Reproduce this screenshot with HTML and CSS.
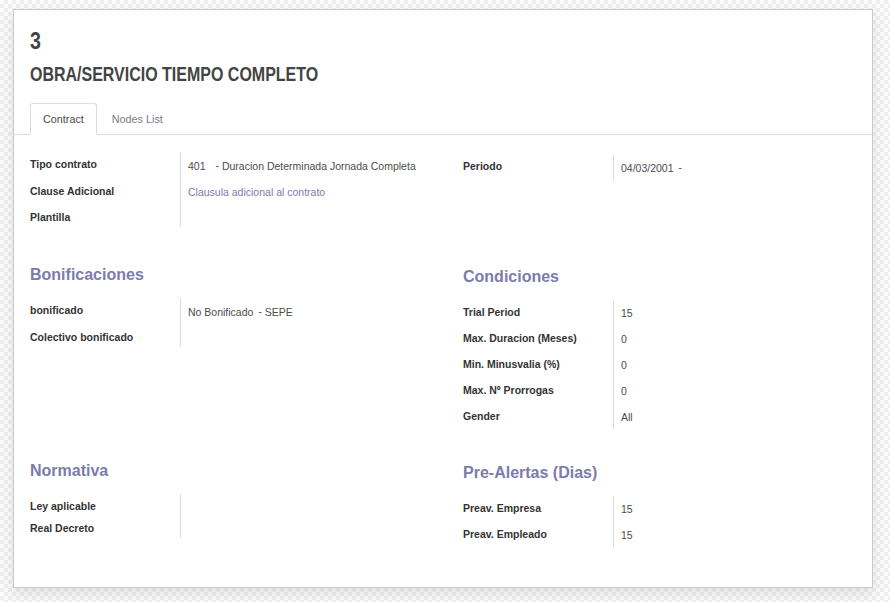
FILE: index.html
```html
<!DOCTYPE html>
<html lang="es">
<head>
<meta charset="utf-8">
<title>Contrato 3</title>
<link rel="stylesheet" href="styles.css">
</head>
<body>
<div class="sheet">
  <div class="rec-id"><span class="narrow">3</span></div>
  <div class="rec-name"><span class="narrow">OBRA/SERVICIO TIEMPO COMPLETO</span></div>

  <div class="tabs">
    <div class="tab active">Contract</div>
    <div class="tab">Nodes List</div>
  </div>

  <div class="row row-first">
    <div class="col">
      <div class="fields">
        <div class="lbl">Tipo contrato</div>
        <div class="val"><span>401</span><span class="dash dash-wide">-</span> Duracion Determinada Jornada Completa</div>
        <div class="lbl">Clause Adicional</div>
        <div class="val link">Clausula adicional al contrato</div>
        <div class="lbl">Plantilla</div>
        <div class="val"></div>
      </div>
    </div>
    <div class="col col-right">
      <div class="fields">
        <div class="lbl">Periodo</div>
        <div class="val"><span>04/03/2001</span><span class="dash">-</span></div>
      </div>
    </div>
  </div>

  <div class="row row-second">
    <div class="col">
      <div class="sep-title">Bonificaciones</div>
      <div class="fields">
        <div class="lbl">bonificado</div>
        <div class="val"><span>No Bonificado</span><span class="dash">-</span> SEPE</div>
        <div class="lbl">Colectivo bonificado</div>
        <div class="val"></div>
      </div>
    </div>
    <div class="col col-right">
      <div class="sep-title">Condiciones</div>
      <div class="fields">
        <div class="lbl">Trial Period</div>
        <div class="val">15</div>
        <div class="lbl">Max. Duracion (Meses)</div>
        <div class="val">0</div>
        <div class="lbl">Min. Minusvalia (%)</div>
        <div class="val">0</div>
        <div class="lbl">Max. Nº Prorrogas</div>
        <div class="val">0</div>
        <div class="lbl">Gender</div>
        <div class="val">All</div>
      </div>
    </div>
  </div>

  <div class="row row-third">
    <div class="col">
      <div class="sep-title">Normativa</div>
      <div class="fields">
        <div class="lbl">Ley aplicable</div>
        <div class="val"></div>
        <div class="lbl">Real Decreto</div>
        <div class="val"></div>
      </div>
    </div>
    <div class="col col-right">
      <div class="sep-title">Pre-Alertas (Dias)</div>
      <div class="fields">
        <div class="lbl">Preav. Empresa</div>
        <div class="val">15</div>
        <div class="lbl">Preav. Empleado</div>
        <div class="val">15</div>
      </div>
    </div>
  </div>
</div>
</body>
</html>
```
FILE: styles.css
```css
html, body {
  margin: 0;
  padding: 0;
}

body {
  width: 890px;
  height: 602px;
  overflow: hidden;
  font-family: "Liberation Sans", Arial, sans-serif;
  color: #4c4c4c;
  background-color: #fbfbfb;
  background-image: conic-gradient(#eeeeee 25%, transparent 0 50%, #eeeeee 0 75%, transparent 0);
  background-size: 8px 8px;
}

.sheet {
  box-sizing: border-box;
  width: 860px;
  min-height: 579px;
  margin: 9px 0 0 13px;
  padding: 16px 16px 0;
  background: #ffffff;
  border: 1px solid #cac9d7;
  box-shadow: 0 5px 12px rgba(0, 0, 0, 0.10);
}

.narrow {
  display: inline-block;
  transform: scaleX(0.82);
  transform-origin: left center;
  white-space: nowrap;
}

.rec-id {
  font-size: 24px;
  line-height: 30px;
  font-weight: bold;
  color: #444444;
}

.rec-name {
  margin-top: 6px;
  font-size: 19.5px;
  line-height: 24px;
  font-weight: bold;
  color: #444444;
}

.tabs {
  display: flex;
  margin: 17px -16px 0;
  padding-left: 16px;
  border-bottom: 1px solid #dddddd;
}

.tab {
  margin-right: 2px;
  margin-bottom: -1px;
  padding: 0 12px;
  line-height: 30px;
  font-size: 10.8px;
  color: #7b7b88;
  border: 1px solid transparent;
  border-radius: 3px 3px 0 0;
}

.tab.active {
  color: #4c4c4c;
  background: #ffffff;
  border-color: #dddddd #dddddd transparent;
}

.row {
  display: grid;
  grid-template-columns: 433px 1fr;
}

.row-first {
  margin-top: 17px;
}

.row-second {
  margin-top: 37px;
}

.row-third {
  margin-top: 30px;
}

.col-right {
  padding-top: 2px;
}

.sep-title {
  font-size: 16px;
  line-height: 22px;
  font-weight: bold;
  color: #7c7bad;
  margin-bottom: 12px;
}

.fields {
  display: grid;
  grid-template-columns: 150px 1fr;
  font-size: 10.5px;
  line-height: 16px;
}

.lbl {
  padding: 4px 0 2px;
  font-weight: bold;
  color: #333333;
}

.val {
  padding: 5px 0 5px 7px;
  border-left: 1px solid #dddddd;
  color: #4c4c4c;
}

.val.link {
  color: #7c7bad;
}

.dash {
  display: inline-block;
  margin-left: 5px;
  vertical-align: 1px;
}

.dash-wide {
  margin-left: 10px;
}
```
